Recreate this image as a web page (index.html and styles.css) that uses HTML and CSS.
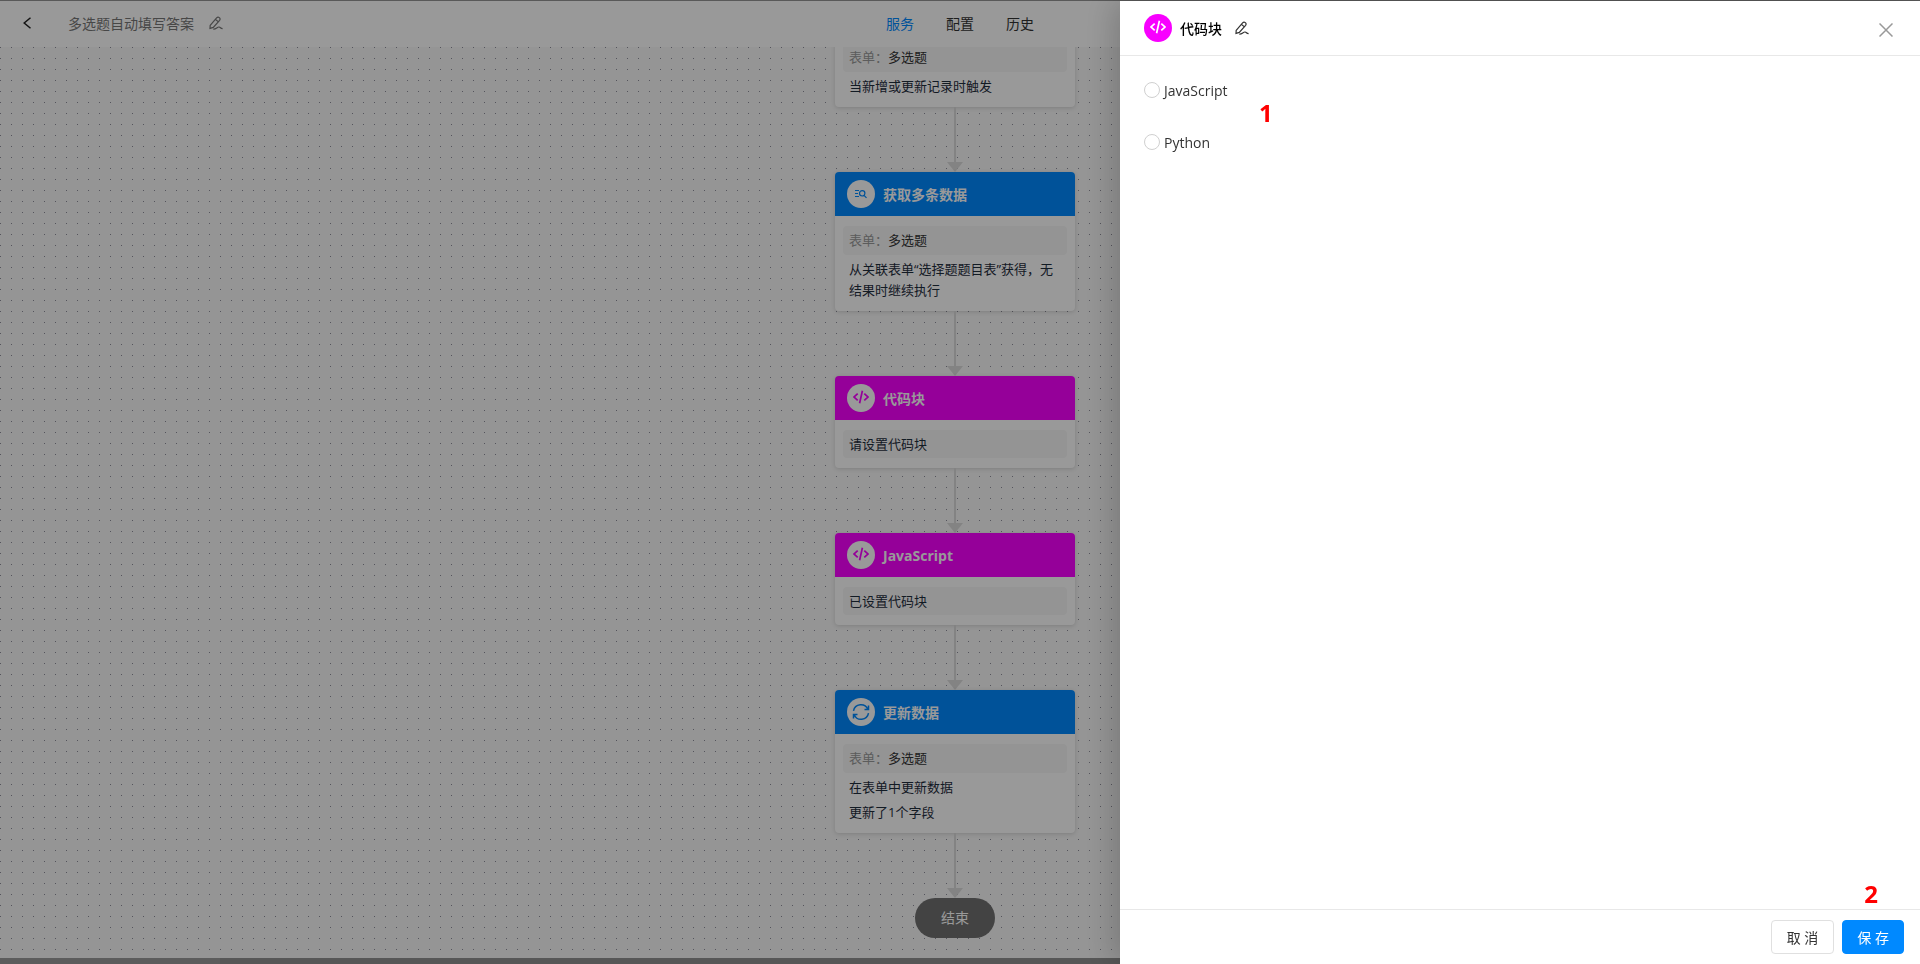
FILE: index.html
```html
<!DOCTYPE html>
<html lang="zh-CN">
<head>
  <meta charset="UTF-8">
  <meta name="viewport" content="width=device-width, initial-scale=1.0">
  <title>多选题自动填写答案</title>
  <link rel="stylesheet" href="styles.css">
</head>
<body>
  <svg class="sprite" aria-hidden="true">
    <symbol id="icon-code" viewBox="0 0 16 16">
      <path d="M4.700 4.600 1.100 8l3.600 3.400M11.300 4.600 14.900 8l-3.600 3.400M9.400 1.800 6.600 14.200" fill="none" stroke="currentColor" stroke-width="1.700"/>
    </symbol>
    <symbol id="icon-edit" viewBox="0 0 14 14">
      <path d="M1.200 9.300 7.600 1.800Q8.900.5 10.300 1.600T10.600 4.300L4.300 11.400 1 12.400ZM6.400 3.200l2.700 2.400M4.300 13.200C7 13.500 8.200 10.800 10 11s1.200 1.600 3.600 1.600" fill="none" stroke="currentColor" stroke-width="1.200"/>
    </symbol>
    <symbol id="icon-search" viewBox="0 0 12 10">
      <path d="M0 1.500h4M0 4.500h3M0 7.500h4" fill="none" stroke="currentColor"/>
      <circle cx="7.200" cy="4.300" r="2.700" fill="none" stroke="currentColor" stroke-width="1.200"/>
      <path d="m9 6.300 2.500 2.500" stroke="currentColor" stroke-width="1.200"/>
    </symbol>
    <symbol id="icon-sync" viewBox="0 0 18 18">
      <path d="M1.500 7.800A7.500 7.500 0 0 1 15.800 6.300M16.500 10.200A7.500 7.500 0 0 1 2.200 11.700M16.500 2.600v4h-4M1.500 15.400v-4h4" fill="none" stroke="currentColor" stroke-width="1.500"/>
    </symbol>
  </svg>

  <div class="page">
    <header class="topbar">
      <div class="topbar-left">
        <button class="icon-btn back" aria-label="返回">
          <svg width="8" height="12" viewBox="0 0 8 12"><path d="M7.500.7 1.200 6l6.300 5.300" fill="none" stroke="currentColor" stroke-width="1.500"/></svg>
        </button>
        <span class="flow-name">多选题自动填写答案</span>
        <button class="icon-btn" aria-label="编辑名称"><svg width="14" height="14"><use href="#icon-edit"/></svg></button>
      </div>
      <nav class="tabs">
        <a href="#" class="active">服务</a>
        <a href="#">配置</a>
        <a href="#">历史</a>
      </nav>
    </header>

    <main class="canvas">
      <div class="flow">
        <section class="card">
          <div class="card-body">
            <div class="field"><span>表单：</span>多选题</div>
            <p>当新增或更新记录时触发</p>
          </div>
        </section>
        <div class="arrow"></div>

        <section class="card">
          <h2 class="card-head blue"><span class="badge"><svg width="12" height="10"><use href="#icon-search"/></svg></span>获取多条数据</h2>
          <div class="card-body">
            <div class="field"><span>表单：</span>多选题</div>
            <p>从关联表单“选择题题目表”获得，无结果时继续执行</p>
          </div>
        </section>
        <div class="arrow"></div>

        <section class="card">
          <h2 class="card-head pink"><span class="badge code"><svg width="16" height="16"><use href="#icon-code"/></svg></span>代码块</h2>
          <div class="card-body">
            <div class="field note">请设置代码块</div>
          </div>
        </section>
        <div class="arrow"></div>

        <section class="card">
          <h2 class="card-head pink"><span class="badge code"><svg width="16" height="16"><use href="#icon-code"/></svg></span>JavaScript</h2>
          <div class="card-body">
            <div class="field note">已设置代码块</div>
          </div>
        </section>
        <div class="arrow"></div>

        <section class="card">
          <h2 class="card-head blue"><span class="badge"><svg width="18" height="18"><use href="#icon-sync"/></svg></span>更新数据</h2>
          <div class="card-body">
            <div class="field"><span>表单：</span>多选题</div>
            <p>在表单中更新数据</p>
            <p>更新了1个字段</p>
          </div>
        </section>
        <div class="arrow"></div>

        <div class="end">结束</div>
      </div>
    </main>
    <div class="scrollbar"></div>
  </div>

  <div class="mask"></div>

  <aside class="drawer">
    <header class="drawer-head">
      <span class="badge code solid"><svg width="16" height="16"><use href="#icon-code"/></svg></span>
      <h1>代码块</h1>
      <button class="icon-btn" aria-label="编辑名称"><svg width="14" height="14"><use href="#icon-edit"/></svg></button>
      <button class="icon-btn close" aria-label="关闭">
        <svg width="14" height="14" viewBox="0 0 14 14"><path d="m.5.500 13 13M13.500.5l-13 13" stroke="currentColor" stroke-width="1.500"/></svg>
      </button>
    </header>
    <form class="drawer-body">
      <div class="options">
        <label><input type="radio" name="lang" value="js">JavaScript</label>
        <label><input type="radio" name="lang" value="py">Python</label>
      </div>
      <b class="step step-one">1</b>
    </form>
    <footer class="drawer-foot">
      <button class="btn">取 消</button>
      <button class="btn primary">保 存</button>
      <b class="step step-two">2</b>
    </footer>
  </aside>
</body>
</html>
```

FILE: styles.css
```css
* {
  box-sizing: border-box;
}
body {
  margin: 0;
  font-family: "Open Sans", "Noto Sans CJK SC", sans-serif;
  font-size: 14px;
  color: #333;
  overflow: hidden;
}
button {
  font: inherit;
  cursor: pointer;
}
.sprite {
  position: absolute;
  width: 0;
  height: 0;
}
.page {
  height: 100vh;
  display: flex;
  flex-direction: column;
  border-top: 1px solid #949494;
}
.topbar {
  flex: none;
  height: 46px;
  padding-bottom: 2px;
  display: grid;
  grid-template-columns: 1fr auto 1fr;
  align-items: center;
  background: #fff;
}
.topbar-left {
  display: flex;
  align-items: center;
  padding-left: 23px;
  color: #777;
}
.icon-btn {
  display: flex;
  padding: 0;
  border: none;
  background: none;
  color: inherit;
}
.back {
  color: #222;
}
.flow-name {
  margin: 0 15px 0 37px;
}
.tabs {
  display: flex;
  gap: 32px;
}
.tabs a {
  color: #333;
  text-decoration: none;
}
.tabs .active {
  color: #0089ff;
}

/* dotted canvas */
.canvas {
  flex: 1;
  min-height: 0;
  overflow: hidden;
  padding-right: 10px;
  background: #f8f8f8 conic-gradient(from 270deg at 1px 1px, #8d8d99 90deg, transparent 0) 0 0 / 11px 11px;
}
.flow {
  display: flex;
  flex-direction: column;
  align-items: center;
}
.card {
  flex: none;
  width: 240px;
  background: #fff;
  border-radius: 4px;
  box-shadow: 0 1px 4px rgba(0, 0, 0, 0.15);
}
.card:first-child {
  margin-top: -14px;
}
.card-head {
  display: flex;
  align-items: center;
  gap: 8px;
  height: 44px;
  margin: 0;
  padding: 0 12px;
  border-radius: 4px 4px 0 0;
  color: #fff;
  font-size: 14px;
}
.blue {
  background: #0089ff;
}
.pink {
  background: #f800ff;
}
.badge {
  display: flex;
  align-items: center;
  justify-content: center;
  width: 28px;
  height: 28px;
  border-radius: 50%;
  background: #fff;
}
.blue .badge {
  color: #0089ff;
}
.pink .badge {
  color: #f800ff;
}
.badge.code {
  padding-bottom: 3px;
}
.badge.solid {
  background: #f800ff;
  color: #fff;
}
.card-body {
  padding: 10px 8px;
  font-size: 13px;
  line-height: 21px;
  color: #1f2d3d;
}
.field {
  padding: 4px 6px;
  border-radius: 4px;
  background: #f7f7f7;
  color: #333;
}
.field span {
  color: #999;
}
.note {
  line-height: 20px;
  color: #1f2d3d;
}
.card-body p {
  margin: 4px 0 0;
  padding: 0 6px;
}
.arrow {
  flex: none;
  display: flex;
  flex-direction: column;
  align-items: center;
  height: 65px;
}
.arrow::before {
  content: "";
  flex: 1;
  width: 2px;
  background: #dadada;
}
.arrow::after {
  content: "";
  border: 8px solid transparent;
  border-top: 10px solid #dadada;
  border-bottom: none;
}
.end {
  width: 80px;
  border-radius: 20px;
  background: #707070;
  color: #fff;
  line-height: 40px;
  text-align: center;
}
.scrollbar {
  flex: none;
  height: 6px;
  background: linear-gradient(#9a9a9a, #9a9a9a) 0 0 / 220px 100% no-repeat #919191;
}

.mask {
  position: fixed;
  inset: 0;
  background: rgba(0, 0, 0, 0.4);
}

/* right drawer */
.drawer {
  position: fixed;
  top: 1px;
  right: 0;
  bottom: 0;
  width: 800px;
  max-width: 100%;
  display: flex;
  flex-direction: column;
  background: #fff;
  box-shadow: -6px 0 30px rgba(0, 0, 0, 0.2);
}
.drawer-head {
  display: flex;
  align-items: center;
  height: 55px;
  padding: 0 27px 0 24px;
  border-bottom: 1px solid #e8e8e8;
}
.drawer-head h1 {
  margin: 0 13px 0 8px;
  font-size: 14px;
  font-weight: 500;
  color: #000;
}
.close {
  margin: 4px 0 0 auto;
  color: #999;
}
.drawer-body {
  flex: 1;
  display: flex;
  padding: 22px 24px;
}
.options {
  display: flex;
  flex-direction: column;
  gap: 28px;
}
.options label {
  display: flex;
  align-items: center;
  gap: 4px;
  height: 24px;
}
.options input {
  appearance: none;
  width: 16px;
  height: 16px;
  margin: 0;
  border: 1px solid #d0d0d0;
  border-radius: 50%;
}
.options input:checked {
  border: 5px solid #0089ff;
}
.step {
  position: absolute;
  color: #f00;
  font-size: 24px;
  line-height: 24px;
}
.step-one {
  top: 100px;
  left: 139px;
}
.step-two {
  right: 42px;
  bottom: 58px;
}
.drawer-foot {
  display: flex;
  align-items: center;
  justify-content: flex-end;
  gap: 8px;
  height: 55px;
  padding: 0 16px;
  border-top: 1px solid #e8e8e8;
}
.btn {
  height: 34px;
  padding: 0 15px;
  border: 1px solid #e0e0e0;
  border-radius: 4px;
  background: #fff;
  color: #333;
}
.btn.primary {
  padding: 0 14px;
  border-color: #0089ff;
  background: #0089ff;
  color: #fff;
}
```
